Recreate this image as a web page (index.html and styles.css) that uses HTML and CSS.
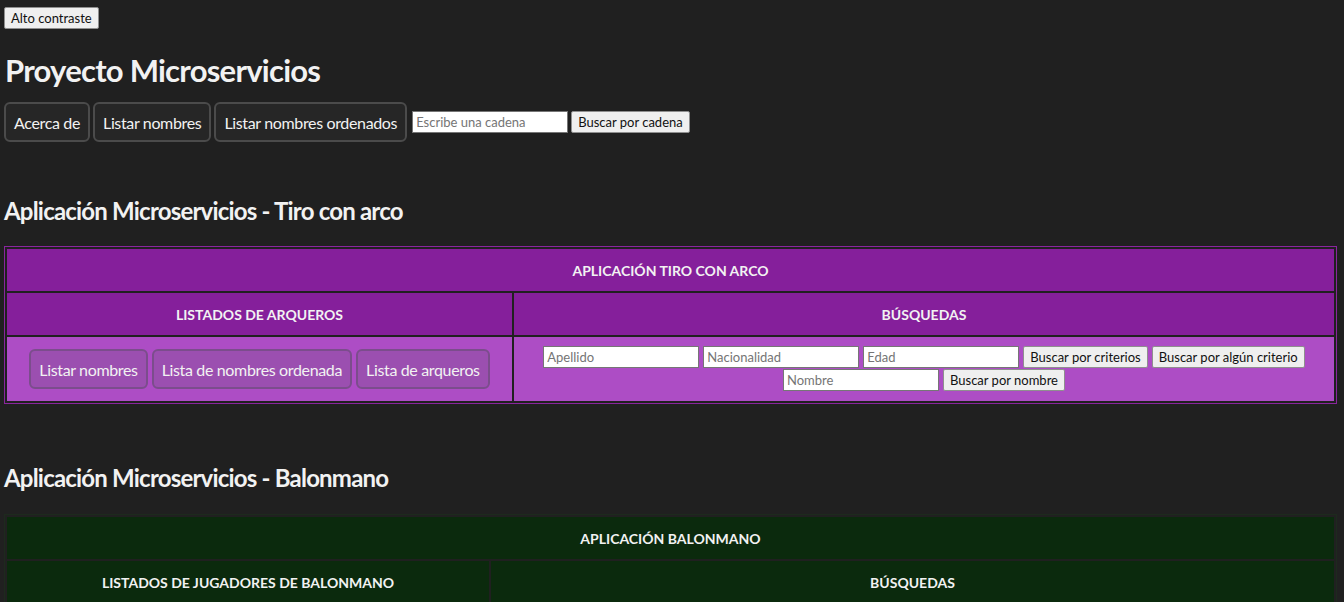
FILE: index.html
```html
<!DOCTYPE html>
<html lang="es">
<head>
<meta charset="utf-8">
<title>Proyecto Microservicios</title>
<link rel="stylesheet" href="styles.css">
</head>
<body>
<div class="top"><button class="std-btn">Alto contraste</button></div>
<h1 class="title">Proyecto Microservicios</h1>
<nav class="nav">
  <button class="nav-btn">Acerca de</button>
  <button class="nav-btn">Listar nombres</button>
  <button class="nav-btn">Listar nombres ordenados</button>
  <input class="std-input" type="text" placeholder="Escribe una cadena">
  <button class="std-btn">Buscar por cadena</button>
</nav>

<h2 class="section-title">Aplicación Microservicios - Tiro con arco</h2>
<table class="app app-arco">
  <tr><th colspan="2" class="head">APLICACIÓN TIRO CON ARCO</th></tr>
  <tr><th class="head col-left">LISTADOS DE ARQUEROS</th><th class="head">BÚSQUEDAS</th></tr>
  <tr>
    <td class="body-cell">
      <div class="btn-row">
        <button class="cell-btn">Listar nombres</button>
        <button class="cell-btn">Lista de nombres ordenada</button>
        <button class="cell-btn">Lista de arqueros</button>
      </div>
    </td>
    <td class="body-cell search">
      <div class="search-row">
        <input class="std-input" type="text" placeholder="Apellido">
        <input class="std-input" type="text" placeholder="Nacionalidad">
        <input class="std-input" type="text" placeholder="Edad">
        <button class="std-btn">Buscar por criterios</button>
        <button class="std-btn">Buscar por algún criterio</button>
      </div>
      <div class="search-row">
        <input class="std-input" type="text" placeholder="Nombre">
        <button class="std-btn">Buscar por nombre</button>
      </div>
    </td>
  </tr>
</table>

<h2 class="section-title second">Aplicación Microservicios - Balonmano</h2>
<table class="app app-balon">
  <tr><th colspan="2" class="head">APLICACIÓN BALONMANO</th></tr>
  <tr><th class="head col-left-b">LISTADOS DE JUGADORES DE BALONMANO</th><th class="head">BÚSQUEDAS</th></tr>
  <tr>
    <td class="body-cell">
      <div class="btn-row">
        <button class="cell-btn">Listar nombres</button>
        <button class="cell-btn">Lista de nombres ordenada</button>
        <button class="cell-btn">Lista de jugadores</button>
      </div>
    </td>
    <td class="body-cell search">
      <div class="search-row">
        <input class="std-input" type="text" placeholder="Nombre">
        <button class="std-btn">Buscar por nombre</button>
      </div>
    </td>
  </tr>
</table>
</body>
</html>
```

FILE: styles.css
```css
html, body {
  background: #202020;
}
body {
  margin: 0;
  padding: 7px 4px 40px 4px;
  color: #f2f2f2;
  font-family: Lato, "Liberation Sans", sans-serif;
}
.top {
  display: flex;
  height: 22px;
}
.std-btn {
  font-family: Lato, "Liberation Sans", sans-serif;
  font-size: 13px;
  height: 22px;
  padding: 0 6px;
  background: #efefef;
  color: #111;
  border: 1px solid #8f8f8f;
  border-radius: 2px;
  vertical-align: middle;
}
.std-input {
  font-family: Lato, "Liberation Sans", sans-serif;
  font-size: 13px;
  width: 156px;
  height: 22px;
  box-sizing: border-box;
  padding: 1px 3px;
  border: 1px solid #767676;
  background: #fff;
  color: #111;
  vertical-align: middle;
}
.std-input::placeholder {
  color: #757575;
}
.title {
  margin: 21px 0 0 1px;
  font-size: 31px;
  font-weight: 700;
  line-height: 40px;
  letter-spacing: -0.75px;
}
.nav {
  margin-top: 12px;
  display: flex;
  align-items: center;
  gap: 3px;
}
.nav-btn {
  font-family: Lato, "Liberation Sans", sans-serif;
  font-size: 16px;
  letter-spacing: -0.35px;
  height: 40px;
  padding: 0 8px;
  background: #262626;
  color: #f2f2f2;
  border: 2px solid #4b4b4b;
  border-radius: 6px;
}
.nav .std-input {
  margin-left: 2px;
}
.section-title {
  margin: 53px 0 0 0;
  font-size: 24px;
  font-weight: 700;
  line-height: 32px;
  letter-spacing: -0.8px;
}
.section-title.second {
  margin-top: 58px;
}
.app {
  width: 1333px;
  margin-top: 19px;
  border-collapse: separate;
  border-spacing: 2px;
}
.app-arco {
  border: 1px solid #8a259e;
}
.app-balon {
  border: 1px solid #1d2a1d;
  margin-top: 20px;
}
.head {
  height: 42px;
  padding: 0;
  font-size: 14px;
  font-weight: 700;
  text-align: center;
  color: #f2f2f2;
}
.app-arco .head {
  background: #851f9b;
}
.app-balon .head {
  background: #0b2a0d;
}
.col-left {
  width: 505px;
}
.col-left-b {
  width: 482px;
}
.body-cell {
  text-align: center;
  padding: 7px 0;
  height: 48px;
}
.app-arco .body-cell {
  background: #ad4dc5;
}
.app-balon .body-cell {
  background: #0b2a0d;
}
.btn-row {
  display: flex;
  justify-content: center;
  gap: 4px;
}
.cell-btn {
  font-family: Lato, "Liberation Sans", sans-serif;
  font-size: 16px;
  letter-spacing: -0.35px;
  height: 40px;
  padding: 0 8px;
  background: #9b4fb0;
  color: #f2f2f2;
  border: 2px solid #7b4d8c;
  border-radius: 6px;
}
.app-balon .cell-btn {
  background: #1a3a1c;
  border-color: #3a5a3c;
}
.search {
  padding: 8px 0;
}
.search-row {
  display: flex;
  justify-content: center;
  gap: 4px;
  margin-bottom: 1px;
}
```
